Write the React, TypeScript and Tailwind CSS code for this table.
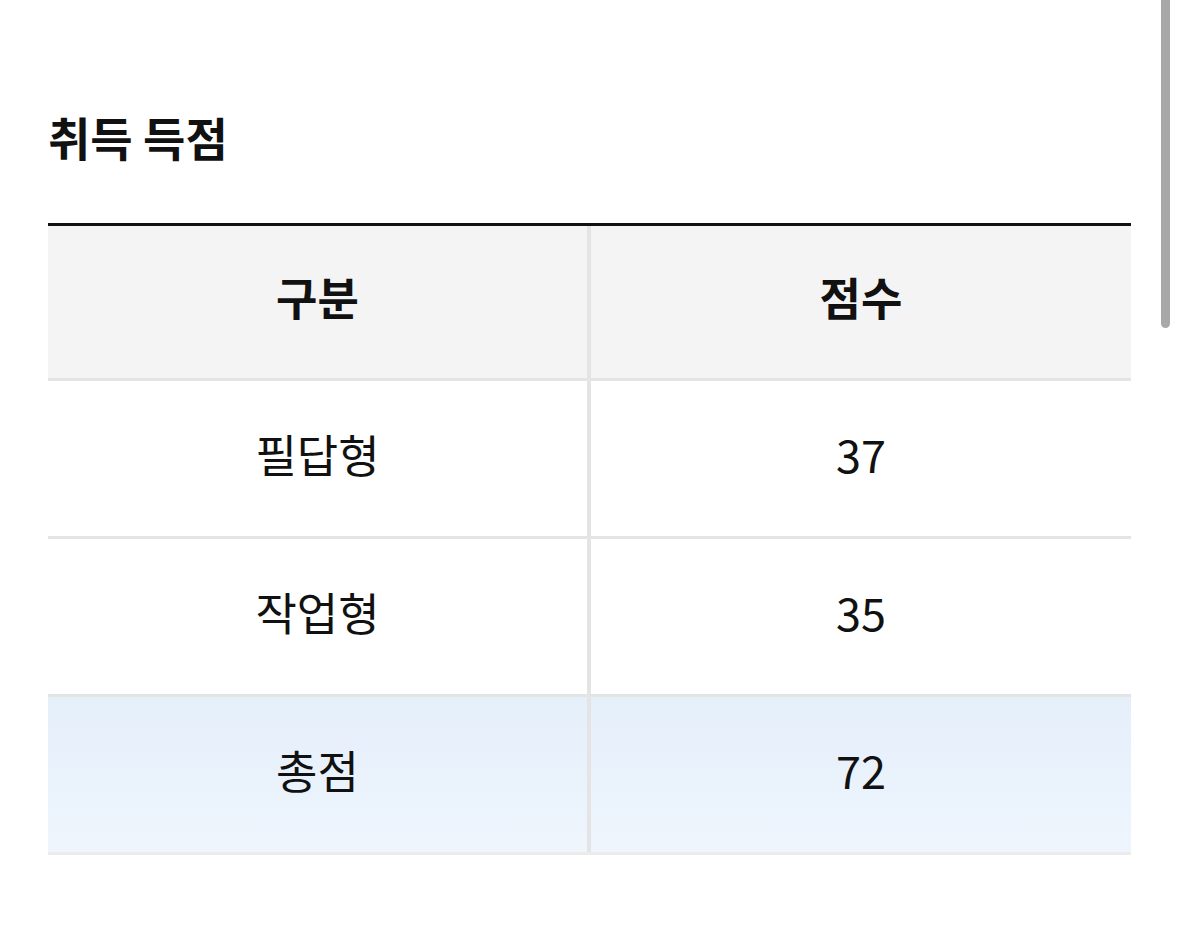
const rows = [
  { label: '필답형', score: '37' },
  { label: '작업형', score: '35' },
]

function Cell({ children, left, bold }: { children: React.ReactNode; left?: boolean; bold?: boolean }) {
  return (
    <div
      className={`flex items-center justify-center pb-[11px] ${left ? 'border-r-4 border-[#e4e4e4]' : ''} ${bold ? 'font-bold' : 'font-normal'}`}
    >
      {children}
    </div>
  )
}

export default function App() {
  return (
    <div
      className="relative min-h-[927px] bg-white px-12 text-[#111]"
      style={{ fontFamily: '"Noto Sans CJK KR", "Noto Sans", sans-serif' }}
    >
      <div className="absolute top-0 right-[9px] h-[328px] w-[9px] rounded-b-full bg-[#a8a8a8]" />

      <h1 className="pt-[110px] text-[46px] leading-[52px] font-bold">취득 득점</h1>

      <div className="mt-[61px] w-[1083px] border-t-[3px] border-[#111] text-[45px] leading-none">
        <div className="grid h-[155px] grid-cols-[543px_1fr] border-b-[3px] border-[#e4e4e4] bg-[#f4f4f4]">
          <Cell left bold>구분</Cell>
          <Cell bold>점수</Cell>
        </div>

        {rows.map((r) => (
          <div key={r.label} className="grid h-[158px] grid-cols-[543px_1fr] border-b-[3px] border-[#e4e4e4]">
            <Cell left>{r.label}</Cell>
            <Cell>{r.score}</Cell>
          </div>
        ))}

        <div className="grid h-[158px] grid-cols-[543px_1fr] border-b-[3px] border-[#ebebeb] bg-gradient-to-b from-[#e5effa] to-[#eef5fd]">
          <Cell left>총점</Cell>
          <Cell>72</Cell>
        </div>
      </div>
    </div>
  )
}
